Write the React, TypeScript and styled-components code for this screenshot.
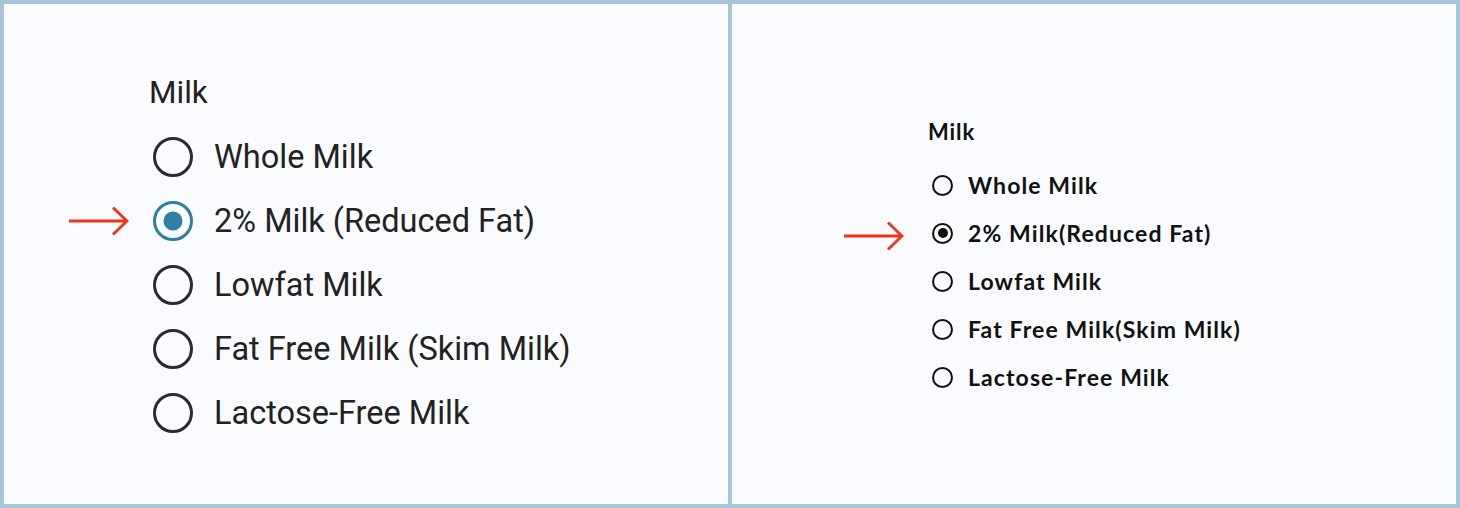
import styled, { createGlobalStyle, css } from "styled-components";

const GlobalStyle = createGlobalStyle`
	html, body {
		margin: 0;
		padding: 0;
		background: #fafbfe;
	}
	* {
		box-sizing: border-box;
	}
`;

const Frame = styled.div`
	width: 1460px;
	height: 508px;
	border: 4px solid #a5c6d9;
	background: #a5c6d9;
	display: grid;
	grid-template-columns: 1fr 1fr;
	gap: 4px;
`;

const Panel = styled.section<{ $variant: "material" | "sketch" }>`
	background: #fafbfe;
	display: flex;
	flex-direction: column;
	${({ $variant }) =>
		$variant === "material"
			? css`
					padding: 71px 0 0 145px;
					font-family: Roboto, "Liberation Sans", sans-serif;
					color: #222;
			  `
			: css`
					padding: 114px 0 0 196px;
					font-family: Lato, "Liberation Sans", sans-serif;
					font-weight: 700;
					color: #111;
			  `}
`;

const GroupLabel = styled.div<{ $variant: "material" | "sketch" }>`
	${({ $variant }) =>
		$variant === "material"
			? css`
					font-size: 31.5px;
					line-height: 36px;
					margin-bottom: 14px;
			  `
			: css`
					font-size: 22px;
					letter-spacing: 0.9px;
					line-height: 28px;
					margin-bottom: 15px;
			  `}
`;

const OptionList = styled.div`
	display: flex;
	flex-direction: column;
`;

const Option = styled.label<{ $variant: "material" | "sketch" }>`
	position: relative;
	display: flex;
	align-items: center;
	${({ $variant }) =>
		$variant === "material"
			? css`
					height: 64px;
					gap: 21px;
					font-size: 32.5px;
			  `
			: css`
					height: 48px;
					gap: 15px;
					font-size: 23px;
					letter-spacing: 1.1px;
			  `}
`;

const Radio = styled.span<{ $variant: "material" | "sketch"; $checked: boolean }>`
	position: relative;
	flex: none;
	margin-left: 4px;
	border-radius: 50%;
	${({ $variant, $checked }) =>
		$variant === "material"
			? css`
					width: 40px;
					height: 40px;
					border: 3px solid ${$checked ? "#2f7ea5" : "#2b2b2b"};
			  `
			: css`
					width: 21px;
					height: 21px;
					border: 2px solid #111;
			  `}

	&::after {
		content: "";
		position: absolute;
		left: 50%;
		top: 50%;
		transform: translate(-50%, -50%);
		border-radius: 50%;
		display: ${({ $checked }) => ($checked ? "block" : "none")};
		${({ $variant }) =>
			$variant === "material"
				? css`
						width: 19px;
						height: 19px;
						background: #2f7ea5;
				  `
				: css`
						width: 10px;
						height: 10px;
						background: #111;
				  `}
	}
`;

const Pointer = styled.svg<{ $variant: "material" | "sketch" }>`
	position: absolute;
	width: 60px;
	height: 30px;
	${({ $variant }) =>
		$variant === "material"
			? css`
					left: -80px;
					top: 17px;
			  `
			: css`
					left: -84px;
					top: 12px;
			  `}
`;

const Arrow = ({ variant }: { variant: "material" | "sketch" }) => (
	<Pointer $variant={variant} viewBox="0 0 60 30">
		<line x1="0" y1="15" x2="58" y2="15" stroke="#f2311d" strokeWidth="2.8" />
		<polyline
			points="44,1.5 58,15 44,28.5"
			fill="none"
			stroke="#f2311d"
			strokeWidth="2.8"
		/>
	</Pointer>
);

const materialOptions = [
	"Whole Milk",
	"2% Milk (Reduced Fat)",
	"Lowfat Milk",
	"Fat Free Milk (Skim Milk)",
	"Lactose-Free Milk",
];

const sketchOptions = [
	"Whole Milk",
	"2% Milk(Reduced Fat)",
	"Lowfat Milk",
	"Fat Free Milk(Skim Milk)",
	"Lactose-Free Milk",
];

const MilkGroup = ({
	variant,
	options,
}: {
	variant: "material" | "sketch";
	options: string[];
}) => (
	<Panel $variant={variant}>
		<GroupLabel $variant={variant}>Milk</GroupLabel>
		<OptionList>
			{options.map((option, i) => (
				<Option key={option} $variant={variant}>
					{i === 1 && <Arrow variant={variant} />}
					<Radio $variant={variant} $checked={i === 1} />
					<span>{option}</span>
				</Option>
			))}
		</OptionList>
	</Panel>
);

const App = () => (
	<>
		<GlobalStyle />
		<Frame>
			<MilkGroup variant="material" options={materialOptions} />
			<MilkGroup variant="sketch" options={sketchOptions} />
		</Frame>
	</>
);

export default App;
